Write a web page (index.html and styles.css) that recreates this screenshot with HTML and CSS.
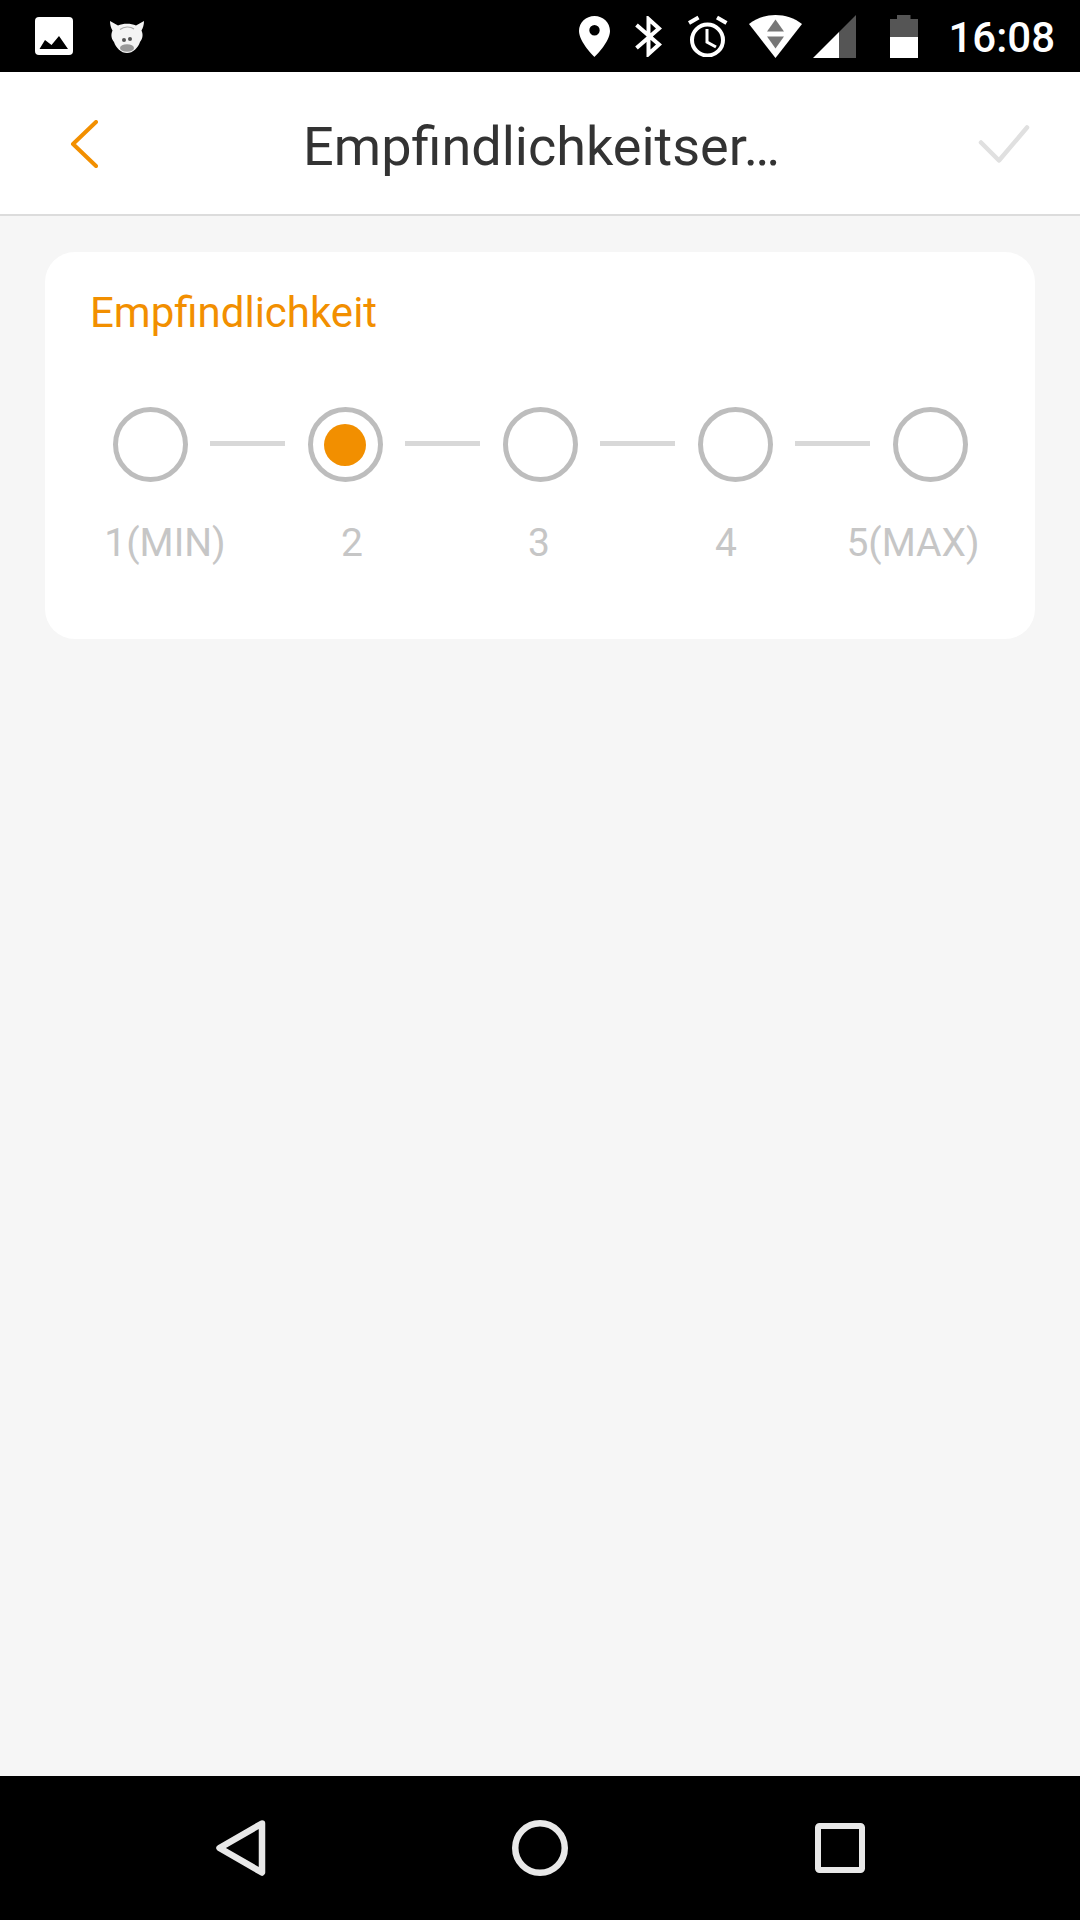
FILE: index.html
```html
<!DOCTYPE html>
<html lang="de">
<head>
  <meta charset="UTF-8" />
  <meta name="viewport" content="width=device-width, initial-scale=1.0"/>
  <title>Empfindlichkeitseinstellung</title>
  <link rel="stylesheet" href="styles.css">
</head>
<body>
  <!-- Status bar -->
  <div class="status-bar">
    <div class="status-left">
      <svg width="38" height="38" viewBox="0 0 38 38">
        <rect width="38" height="38" rx="4" fill="#fff"/>
        <path d="M4.500 32L10 23L16.500 28L24 19L33 32Z" fill="#000"/>
      </svg>
      <svg class="ic-pig" width="36" height="33" viewBox="0 0 36 33">
        <path d="M1 1L9 5.500C14 3 22 3 27 5.500L35 1C35 5 34 8 32.500 10.500C34.500 15 33.500 19 31 22C29 28 24 33 18 33C12 33 7 28 5 22C2.500 19 1.500 15 3.500 10.500C2 8 1 5 1 1Z" fill="#f4f4f4"/>
        <path d="M11 9.500C15 6.500 21 6 25 9" fill="none" stroke="#aaa" stroke-width="1.200"/>
        <circle cx="15" cy="20" r="2" fill="#555"/>
        <circle cx="21" cy="19" r="2" fill="#555"/>
        <ellipse cx="18" cy="28" rx="7" ry="3.800" fill="#999"/>
      </svg>
    </div>
    <div class="status-right">
      <svg width="31" height="41" viewBox="0 0 31 41">
        <path fill-rule="evenodd" d="M15.500 0C7 0 0 6.500 0 15C0 26 15.500 41 15.500 41S31 26 31 15C31 6.500 24 0 15.500 0ZM15.500 9A5.200 5.200 0 1 1 15.500 19.400A5.200 5.200 0 1 1 15.500 9Z" fill="#fff"/>
      </svg>
      <svg class="ic-bt" width="27" height="41" viewBox="0 0 27 41">
        <path d="M1.500 9L24 28.500L13.500 38V3L24 12.500L1.500 32" fill="none" stroke="#fff" stroke-width="4"/>
      </svg>
      <svg class="ic-alarm" width="41" height="42" viewBox="0 0 41 42">
        <circle cx="20.500" cy="25" r="15.500" fill="none" stroke="#fff" stroke-width="4"/>
        <path d="M20 14V27L29 32" fill="none" stroke="#fff" stroke-width="3"/>
        <path d="M11.500 2.500L2 8M30 2.500L39.500 8" fill="none" stroke="#fff" stroke-width="4"/>
      </svg>
      <svg class="ic-wifi" width="53" height="43" viewBox="0 0 53 43">
        <path d="M0 9C15 -3 38 -3 53 9L26.500 43Z" fill="#fff"/>
        <path d="M26.500 4.500L35 16.500H18Z" fill="#777"/>
        <path d="M18 21.500H35L26.500 33.500Z" fill="#777"/>
      </svg>
      <svg class="ic-signal" width="43" height="43" viewBox="0 0 43 43">
        <path d="M43 0V43H26V17Z" fill="#555"/>
        <path d="M26 17V43H0Z" fill="#fff"/>
      </svg>
      <svg class="ic-battery" width="28" height="43" viewBox="0 0 28 43">
        <path d="M7 0H20.500V4H28V22H0V4H7Z" fill="#555"/>
        <rect y="22" width="28" height="21" fill="#fff"/>
      </svg>
      <span class="clock">16:08</span>
    </div>
  </div>

  <!-- App bar -->
  <div class="app-bar">
    <svg class="back-icon" width="28" height="48" viewBox="0 0 28 48">
      <path d="M26 2L3 24L26 46" fill="none" stroke="#f28f00" stroke-width="4" stroke-linecap="round" stroke-linejoin="round"/>
    </svg>
    <div class="app-title">Empfindlichkeitser…</div>
    <svg class="check-icon" width="52" height="40" viewBox="0 0 52 40">
      <path d="M3 18.500L21 36.500L49 3.500" fill="none" stroke="#e0e0e0" stroke-width="4.500" stroke-linecap="round" stroke-linejoin="round"/>
    </svg>
  </div>

  <div class="content">
    <div class="card">
      <div class="card-title">Empfindlichkeit</div>
      <div class="level-row">
        <div class="level"></div>
        <div class="level-line"></div>
        <div class="level active"></div>
        <div class="level-line"></div>
        <div class="level"></div>
        <div class="level-line"></div>
        <div class="level"></div>
        <div class="level-line"></div>
        <div class="level"></div>
      </div>
      <div class="level-labels">
        <span>1(MIN)</span>
        <span>2</span>
        <span>3</span>
        <span>4</span>
        <span>5(MAX)</span>
      </div>
    </div>
  </div>

  <!-- Navigation bar -->
  <div class="nav-bar">
    <svg width="50" height="56" viewBox="0 0 50 56">
      <path d="M46 3.500L3.500 28L46 52.500Z" fill="none" stroke="#e8e8e8" stroke-width="6.500" stroke-linejoin="round"/>
    </svg>
    <svg class="nav-home" width="56" height="56" viewBox="0 0 56 56">
      <circle cx="28" cy="28" r="24.750" fill="none" stroke="#e8e8e8" stroke-width="6.500"/>
    </svg>
    <svg width="50" height="50" viewBox="0 0 50 50">
      <rect x="3" y="3" width="44" height="44" rx="1.500" fill="none" stroke="#e8e8e8" stroke-width="6"/>
    </svg>
  </div>
</body>
</html>
```
FILE: styles.css
```css
* {
  box-sizing: border-box;
}

body {
  margin: 0;
  width: 1080px;
  height: 1920px;
  display: flex;
  flex-direction: column;
  font-family: 'Roboto', sans-serif;
  background: #f6f6f6;
}

svg {
  display: block;
  flex: none;
}

.status-bar {
  height: 72px;
  background: #000;
  display: flex;
  justify-content: space-between;
  align-items: center;
  padding: 0 25px 0 35px;
}

.status-left {
  display: flex;
  align-items: center;
}

.ic-pig {
  margin-left: 36px;
  filter: blur(0.6px);
}

.status-right {
  display: flex;
  align-items: center;
}

.ic-bt {
  margin-left: 25px;
}

.ic-alarm {
  margin-left: 25px;
}

.ic-wifi {
  margin-left: 21px;
}

.ic-signal {
  margin-left: 11px;
}

.ic-battery {
  margin-left: 34px;
}

.clock {
  margin-left: 30px;
  padding-top: 3px;
  color: #fff;
  font-size: 42px;
  font-weight: 500;
  line-height: 69px;
}

.app-bar {
  height: 144px;
  background: #fff;
  border-bottom: 2px solid #dcdcdc;
  display: flex;
  align-items: center;
  justify-content: space-between;
  padding: 0 50px 2px 70px;
}

.back-icon {
  margin-top: 4px;
}

.check-icon {
  margin-top: 3px;
}

.app-title {
  margin: 9px 0 0 7px;
  font-size: 54px;
  color: #333;
}

.content {
  flex: 1;
  padding: 36px 45px 0;
}

.card {
  height: 387px;
  background: #fff;
  border-radius: 30px;
  padding: 36px 0 0;
}

.card-title {
  padding-left: 45px;
  font-size: 42px;
  line-height: 50px;
  color: #f28f00;
}

.level-row {
  display: flex;
  align-items: center;
  justify-content: center;
  gap: 22.5px;
  margin-top: 69px;
}

.level {
  width: 75px;
  height: 75px;
  border: 5px solid #bdbdbd;
  border-radius: 50%;
  display: flex;
  align-items: center;
  justify-content: center;
}

.level.active::before {
  content: "";
  width: 42px;
  height: 42px;
  border-radius: 50%;
  background: #f28f00;
}

.level-line {
  width: 75px;
  height: 5px;
  margin-top: -2px;
  background: #d8d8d8;
}

.level-labels {
  display: grid;
  grid-template-columns: repeat(5, 187px);
  justify-content: center;
  margin-top: 37px;
  padding-right: 2px;
  font-size: 39px;
  line-height: 48px;
  color: #c6c6c6;
  text-align: center;
}

.nav-bar {
  height: 144px;
  background: #000;
  display: flex;
  align-items: center;
  padding: 0 215px 0 216px;
  justify-content: space-between;
}

.nav-home {
  margin-right: 2px;
}
```
